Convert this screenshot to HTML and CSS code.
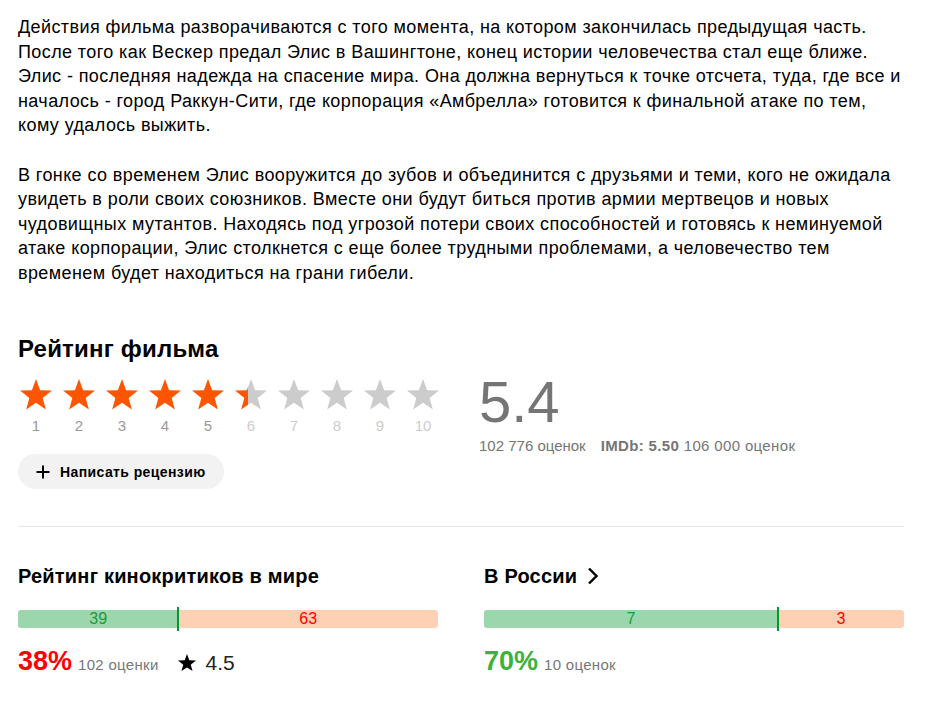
FILE: index.html
```html
<!DOCTYPE html>
<html lang="ru">
<head>
<meta charset="utf-8">
<title>Рейтинг фильма</title>
<link rel="stylesheet" href="styles.css">
</head>
<body>
<main class="page">
  <section class="synopsis">
    <p>Действия фильма разворачиваются с того момента, на котором закончилась предыдущая часть. После того как Вескер предал Элис в Вашингтоне, конец истории человечества стал еще ближе. Элис - последняя надежда на спасение мира. Она должна вернуться к точке отсчета, туда, где все и началось - город Раккун-Сити, где корпорация «Амбрелла» готовится к финальной атаке по тем, кому удалось выжить.</p>
    <p>В гонке со временем Элис вооружится до зубов и объединится с друзьями и теми, кого не ожидала увидеть в роли своих союзников. Вместе они будут биться против армии мертвецов и новых чудовищных мутантов. Находясь под угрозой потери своих способностей и готовясь к неминуемой атаке корпорации, Элис столкнется с еще более трудными проблемами, а человечество тем временем будет находиться на грани гибели.</p>
  </section>

  <section class="rating">
    <h2 class="rating-title">Рейтинг фильма</h2>
    <div class="rating-row">
      <div class="rating-left">
        <svg width="0" height="0" class="defs" aria-hidden="true">
          <defs>
            <linearGradient id="partial" x1="0" x2="1" y1="0" y2="0">
              <stop offset="0.4" stop-color="#ff5500"/>
              <stop offset="0.4" stop-color="#cccccc"/>
            </linearGradient>
          </defs>
        </svg>
        <ul class="stars">
          <li class="star on"><svg viewBox="0 0 32 32" width="32" height="32"><path d="M16 0 L20.11 11.14 L31.98 11.61 L22.66 18.96 L25.87 30.39 L16 23.8 L6.13 30.39 L9.34 18.96 L0.02 11.61 L11.89 11.14 Z"/></svg><span class="num">1</span></li>
          <li class="star on"><svg viewBox="0 0 32 32" width="32" height="32"><path d="M16 0 L20.11 11.14 L31.98 11.61 L22.66 18.96 L25.87 30.39 L16 23.8 L6.13 30.39 L9.34 18.96 L0.02 11.61 L11.89 11.14 Z"/></svg><span class="num">2</span></li>
          <li class="star on"><svg viewBox="0 0 32 32" width="32" height="32"><path d="M16 0 L20.11 11.14 L31.98 11.61 L22.66 18.96 L25.87 30.39 L16 23.8 L6.13 30.39 L9.34 18.96 L0.02 11.61 L11.89 11.14 Z"/></svg><span class="num">3</span></li>
          <li class="star on"><svg viewBox="0 0 32 32" width="32" height="32"><path d="M16 0 L20.11 11.14 L31.98 11.61 L22.66 18.96 L25.87 30.39 L16 23.8 L6.13 30.39 L9.34 18.96 L0.02 11.61 L11.89 11.14 Z"/></svg><span class="num">4</span></li>
          <li class="star on"><svg viewBox="0 0 32 32" width="32" height="32"><path d="M16 0 L20.11 11.14 L31.98 11.61 L22.66 18.96 L25.87 30.39 L16 23.8 L6.13 30.39 L9.34 18.96 L0.02 11.61 L11.89 11.14 Z"/></svg><span class="num">5</span></li>
          <li class="star half"><svg viewBox="0 0 32 32" width="32" height="32"><path d="M16 0 L20.11 11.14 L31.98 11.61 L22.66 18.96 L25.87 30.39 L16 23.8 L6.13 30.39 L9.34 18.96 L0.02 11.61 L11.89 11.14 Z"/></svg><span class="num">6</span></li>
          <li class="star off"><svg viewBox="0 0 32 32" width="32" height="32"><path d="M16 0 L20.11 11.14 L31.98 11.61 L22.66 18.96 L25.87 30.39 L16 23.8 L6.13 30.39 L9.34 18.96 L0.02 11.61 L11.89 11.14 Z"/></svg><span class="num">7</span></li>
          <li class="star off"><svg viewBox="0 0 32 32" width="32" height="32"><path d="M16 0 L20.11 11.14 L31.98 11.61 L22.66 18.96 L25.87 30.39 L16 23.8 L6.13 30.39 L9.34 18.96 L0.02 11.61 L11.89 11.14 Z"/></svg><span class="num">8</span></li>
          <li class="star off"><svg viewBox="0 0 32 32" width="32" height="32"><path d="M16 0 L20.11 11.14 L31.98 11.61 L22.66 18.96 L25.87 30.39 L16 23.8 L6.13 30.39 L9.34 18.96 L0.02 11.61 L11.89 11.14 Z"/></svg><span class="num">9</span></li>
          <li class="star off"><svg viewBox="0 0 32 32" width="32" height="32"><path d="M16 0 L20.11 11.14 L31.98 11.61 L22.66 18.96 L25.87 30.39 L16 23.8 L6.13 30.39 L9.34 18.96 L0.02 11.61 L11.89 11.14 Z"/></svg><span class="num">10</span></li>
        </ul>
        <button class="review-btn" type="button">
          <svg class="plus" viewBox="0 0 14 14" width="14" height="14"><path d="M7 0.5 V13.5 M0.5 7 H13.5" stroke="#000" stroke-width="2" fill="none"/></svg>
          <span>Написать рецензию</span>
        </button>
      </div>
      <div class="score">
        <div class="score-value">5.4</div>
        <div class="score-meta"><span>102 776 оценок</span><span class="imdb"><b>IMDb: 5.50</b> 106 000 оценок</span></div>
      </div>
    </div>
  </section>

  <hr class="divider">

  <section class="critics">
    <div class="critic-col">
      <h3 class="critic-title">Рейтинг кинокритиков в мире</h3>
      <div class="bar">
        <div class="bar-pos" style="width: 38.2%">39</div>
        <div class="bar-neg">63</div>
      </div>
      <div class="critic-stats">
        <span class="pct bad">38%</span>
        <span class="count">102 оценки</span>
        <span class="avg"><svg viewBox="0 0 32 32" width="18" height="18"><path d="M16 0 L20.11 11.14 L31.98 11.61 L22.66 18.96 L25.87 30.39 L16 23.8 L6.13 30.39 L9.34 18.96 L0.02 11.61 L11.89 11.14 Z" fill="#000"/></svg>4.5</span>
      </div>
    </div>
    <div class="critic-col">
      <h3 class="critic-title">В России <svg class="chev" viewBox="0 0 12 18" width="12" height="18"><path d="M2 1.5 L9.5 9 L2 16.5" stroke="#000" stroke-width="2.4" fill="none"/></svg></h3>
      <div class="bar">
        <div class="bar-pos" style="width: 70%">7</div>
        <div class="bar-neg">3</div>
      </div>
      <div class="critic-stats">
        <span class="pct good">70%</span>
        <span class="count">10 оценок</span>
      </div>
    </div>
  </section>
</main>
</body>
</html>
```

FILE: styles.css
```css
* { box-sizing: border-box; }

html, body {
  margin: 0;
  padding: 0;
  background: #fff;
}

body {
  font-family: "Liberation Sans", Arial, sans-serif;
  color: #000;
}

.page {
  width: 935px;
  padding: 15px 31px 0 18px;
}

.synopsis {
  margin-right: -4px;
}

.synopsis p {
  margin: 0 0 25px;
  font-size: 18px;
  line-height: 24.5px;
  letter-spacing: 0.4px;
}

.synopsis p:last-child { margin-bottom: 0; }

.rating { margin-top: 50px; }

.rating-title {
  margin: 0;
  font-size: 24px;
  line-height: 28px;
  font-weight: 700;
  letter-spacing: 0.2px;
}

.rating-row {
  display: flex;
  align-items: flex-start;
  gap: 38px;
  margin-top: 16px;
}

.defs { position: absolute; }

.stars {
  display: flex;
  gap: 7px;
  list-style: none;
  margin: 0;
  padding: 0;
}

.star {
  width: 36px;
  display: flex;
  flex-direction: column;
  align-items: center;
}

.star svg { display: block; }
.star.on path { fill: #ff5500; }
.star.half path { fill: url(#partial); }
.star.off path { fill: #cccccc; }

.num {
  margin-top: 6px;
  font-size: 15px;
  line-height: 18px;
  color: #999;
}

.star.half .num, .star.off .num { color: #ccc; }

.review-btn {
  margin-top: 19px;
  height: 35px;
  padding: 0 18px;
  border: 0;
  border-radius: 18px;
  background: #f2f2f2;
  display: inline-flex;
  align-items: center;
  gap: 10px;
  font-family: inherit;
  font-size: 14px;
  font-weight: 700;
  letter-spacing: 0.4px;
  color: #000;
}

.plus { display: block; }

.score {
  margin-top: -6px;
  color: #757575;
}

.score-value {
  font-size: 58px;
  line-height: 58px;
}

.score-meta {
  margin-top: 5px;
  display: flex;
  gap: 15px;
  font-size: 15px;
  line-height: 20px;
}

.imdb { letter-spacing: 0.35px; }
.imdb b { font-weight: 700; }

.divider {
  margin: 37px 0 0;
  border: 0;
  height: 1px;
  background: #e6e6e6;
}

.critics {
  display: flex;
  gap: 46px;
  margin-top: 37px;
}

.critic-col { width: 420px; }

.critic-title {
  margin: 0;
  font-size: 20px;
  line-height: 24px;
  font-weight: 700;
  letter-spacing: 0.2px;
  display: flex;
  align-items: center;
  gap: 10px;
}

.chev { display: block; }

.bar {
  position: relative;
  display: flex;
  height: 18px;
  margin-top: 22px;
  border-radius: 3px;
  font-size: 16px;
  line-height: 18px;
  text-align: center;
}

.bar-pos {
  position: relative;
  background: #9bd6ad;
  color: #1a9b3c;
  border-radius: 3px 0 0 3px;
}

.bar-pos::after {
  content: "";
  position: absolute;
  right: -1px;
  top: -3px;
  width: 2px;
  height: 24px;
  background: #009a2e;
}

.bar-neg {
  flex: 1;
  background: #ffd1b4;
  color: #ff0000;
  border-radius: 0 3px 3px 0;
}

.critic-stats {
  margin-top: 18px;
  display: flex;
  align-items: baseline;
  height: 30px;
}

.pct {
  font-size: 27px;
  line-height: 30px;
  font-weight: 700;
}

.pct.bad { color: #ff0000; }
.pct.good { color: #3bb33b; }

.count {
  margin-left: 6px;
  font-size: 15px;
  letter-spacing: 0.3px;
  color: #777;
}

.avg {
  margin-left: 19px;
  font-size: 21px;
  color: #222;
  display: inline-flex;
  align-items: baseline;
  gap: 10px;
}

.avg svg { align-self: center; }
```
